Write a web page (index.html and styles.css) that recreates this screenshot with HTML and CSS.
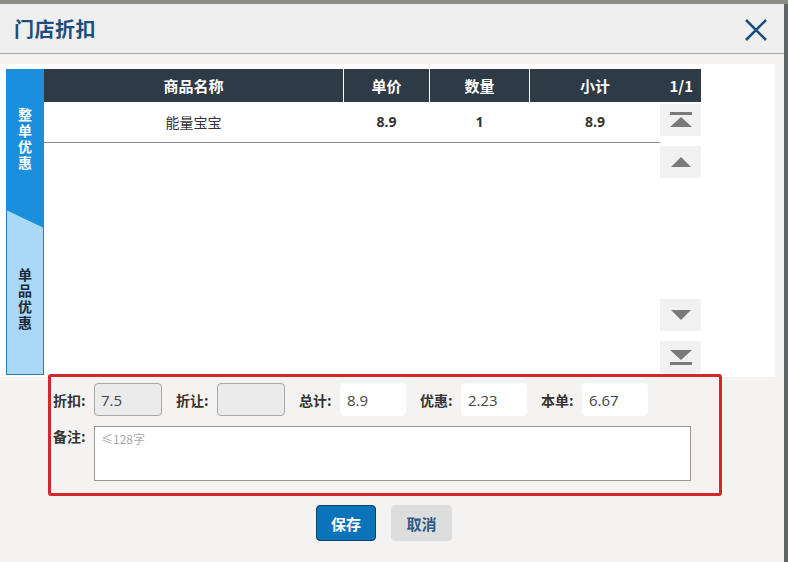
FILE: index.html
```html
<!DOCTYPE html>
<html>
<head>
	<meta charset="utf-8">
	<title>门店折扣</title>
	<link rel="stylesheet" href="styles.css">
</head>
<body>
	<div class="dialog">
		<div class="dialog-header">
			<span class="dialog-title">门店折扣</span>
			<svg class="close" width="24" height="24" viewBox="0 0 24 24">
				<path d="M2 2 L22 22 M22 2 L2 22" stroke="#1d4e7e" stroke-width="2.6" fill="none"/>
			</svg>
		</div>

		<div class="dialog-body">
			<div class="panel">
				<div class="tabs">
					<div class="tab tab-active"><span class="tab-text">整单优惠</span></div>
					<div class="tab tab-other"><span class="tab-text">单品优惠</span></div>
				</div>

				<div class="grid">
					<div class="grid-head">
						<div class="col col-name">商品名称</div>
						<div class="col col-price sep">单价</div>
						<div class="col col-qty sep">数量</div>
						<div class="col col-sum sep">小计</div>
						<div class="col col-page">1/1</div>
					</div>
					<div class="grid-main">
						<div class="rows">
							<div class="row">
								<div class="col col-name">能量宝宝</div>
								<div class="col col-price num">8.9</div>
								<div class="col col-qty num">1</div>
								<div class="col col-sum num">8.9</div>
							</div>
						</div>
						<div class="pager">
							<div class="page-btn">
								<svg width="22" height="16" viewBox="0 0 22 16"><rect x="0" y="0" width="22" height="3" fill="#7a7a7a"/><path d="M11 5 L22 15 L0 15 Z" fill="#7a7a7a"/></svg>
							</div>
							<div class="page-btn">
								<svg width="20" height="10" viewBox="0 0 20 10"><path d="M10 0 L20 10 L0 10 Z" fill="#7a7a7a"/></svg>
							</div>
							<div class="pager-space"></div>
							<div class="page-btn">
								<svg width="20" height="10" viewBox="0 0 20 10"><path d="M0 0 L20 0 L10 10 Z" fill="#7a7a7a"/></svg>
							</div>
							<div class="page-btn">
								<svg width="22" height="16" viewBox="0 0 22 16"><path d="M0 1 L22 1 L11 11 Z" fill="#7a7a7a"/><rect x="0" y="13" width="22" height="3" fill="#7a7a7a"/></svg>
							</div>
						</div>
					</div>
				</div>
			</div>

			<div class="form-box">
				<div class="form-row">
					<label class="label">折扣:</label>
					<input class="field field-off" type="text" value="7.5">
					<label class="label">折让:</label>
					<input class="field field-off" type="text" value="">
					<label class="label">总计:</label>
					<input class="field field-sm" type="text" value="8.9">
					<label class="label">优惠:</label>
					<input class="field field-sm" type="text" value="2.23">
					<label class="label">本单:</label>
					<input class="field field-sm" type="text" value="6.67">
				</div>
				<div class="form-row note-row">
					<label class="label">备注:</label>
					<textarea class="note" placeholder="≤128字"></textarea>
				</div>
			</div>

			<div class="actions">
				<button class="btn btn-save">保存</button>
				<button class="btn btn-cancel">取消</button>
			</div>
		</div>
	</div>
</body>
</html>
```

FILE: styles.css
```css
body {
	margin: 0;
	background: #8d8c83;
	font-family: "Noto Sans CJK SC", "Noto Sans", sans-serif;
	color: #333;
}

.dialog {
	margin-top: 4px;
	width: 784px;
	height: 558px;
	background: #f4f3f1;
	border-right: 4px solid #5f6466;
}

.dialog-header {
	height: 49px;
	background: #efefef;
	border-bottom: 1px solid #a3a3a3;
	display: flex;
	align-items: center;
	justify-content: space-between;
	padding: 0 16px 0 14px;
}

.dialog-title {
	font-size: 20px;
	font-weight: bold;
	color: #1d4e7e;
	letter-spacing: 0.5px;
}

.close {
	margin-top: 2px;
}

.dialog-body {
	padding-top: 10px;
}

.panel {
	width: 769px;
	height: 308px;
	background: #fff;
	display: flex;
	padding: 5px 0 0 6px;
}

.tabs {
	width: 38px;
	height: 306px;
	display: flex;
	flex-direction: column;
}

.tab {
	display: flex;
	justify-content: center;
	font-size: 14px;
	font-weight: bold;
	box-sizing: border-box;
}

.tab-text {
	writing-mode: vertical-rl;
	text-orientation: upright;
	letter-spacing: 2px;
	line-height: 16px;
}

.tab-active {
	height: 141px;
	background: #1b8fdb;
	color: #fff;
	padding-top: 39px;
}

.tab-other {
	position: relative;
	flex: 1;
	background: #a9d9f6;
	border: 1px solid #2c7bb3;
	border-top: none;
	color: #1c2a3a;
	padding-top: 58px;
}

.tab-other::before {
	content: "";
	position: absolute;
	top: 0;
	left: -1px;
	border-top: 18px solid #1b8fdb;
	border-right: 38px solid transparent;
	transform: scaleX(-1);
}

.grid {
	width: 657px;
	height: 304px;
	display: flex;
	flex-direction: column;
}

.grid-head {
	display: flex;
	height: 33px;
	background: #2f3a47;
	color: #fff;
	font-size: 15px;
	font-weight: bold;
}

.grid-head .col {
	line-height: 33px;
}

.col {
	text-align: center;
	box-sizing: border-box;
}

.sep {
	border-left: 1px solid #fff;
}

.col-name { width: 299px; }
.col-price { width: 86px; }
.col-qty { width: 100px; }
.col-sum { width: 131px; }
.col-page { width: 41px; text-align: right; padding-right: 8px; }

.grid-main {
	display: flex;
	flex: 1;
}

.rows {
	width: 616px;
}

.row {
	display: flex;
	height: 40px;
	border-bottom: 1px solid #8a8a8a;
	font-size: 14px;
	line-height: 40px;
}

.row .col-price, .row .col-qty, .row .col-sum {
	border-left: 1px solid transparent;
}

.num {
	font-weight: bold;
	font-family: "Open Sans", "Noto Sans", sans-serif;
}

.pager {
	width: 41px;
	display: flex;
	flex-direction: column;
	padding-top: 2px;
	gap: 10px;
}

.pager-space {
	flex: 1;
}

.page-btn {
	height: 32px;
	background: #f1f1f2;
	display: flex;
	align-items: center;
	justify-content: center;
}

.form-box {
	margin: -3px 0 0 48px;
	width: 668px;
	height: 116px;
	border: 3px solid #d3282b;
	border-radius: 3px;
}

.form-row {
	display: flex;
	align-items: center;
	padding: 6px 0 0 2px;
}

.label {
	width: 41px;
	font-size: 14px;
	font-weight: bold;
	color: #333;
}

.field {
	width: 68px;
	height: 33px;
	box-sizing: border-box;
	border: 1px solid #fff;
	border-radius: 4px;
	background: #fff;
	font-family: "Open Sans", "Noto Sans", sans-serif;
	font-size: 15px;
	color: #444;
	padding: 0 6px;
	margin-right: 14px;
}

.field-sm {
	width: 66px;
}

.field-off {
	background: #ebebeb;
	border-color: #a9a9a9;
}

.note-row {
	align-items: flex-start;
	padding-top: 10px;
}

.note {
	width: 597px;
	height: 55px;
	box-sizing: border-box;
	border: 1px solid #999;
	resize: none;
	font-family: "Noto Sans CJK SC", "Noto Sans", sans-serif;
	font-size: 12px;
	padding: 3px 6px;
}

.note::placeholder {
	color: #aaa;
}

.actions {
	display: flex;
	gap: 15px;
	padding: 9px 0 0 316px;
}

.btn {
	height: 36px;
	padding: 0;
	font-family: "Noto Sans CJK SC", sans-serif;
	font-size: 15px;
	font-weight: bold;
	border-radius: 4px;
}

.btn-save {
	width: 60px;
	background: #0b73b9;
	border: 1px solid #0f3f66;
	color: #fff;
}

.btn-cancel {
	width: 61px;
	background: #dddddd;
	border: 1px solid #dddddd;
	color: #2e5a86;
}
```
